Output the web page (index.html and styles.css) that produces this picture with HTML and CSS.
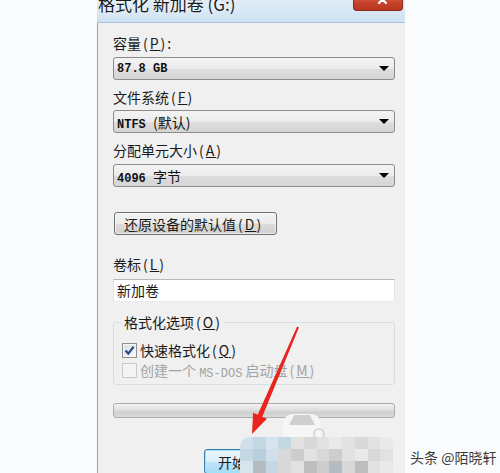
FILE: index.html
```html
<!DOCTYPE html>
<html lang="zh-CN">
<head>
    <meta charset="UTF-8">
    <title>格式化 新加卷 (G:)</title>
    <link rel="stylesheet" href="styles.css">
</head>
<body>
    <div class="screen">
        <div class="window">
            <div class="titlebar">
                <span class="title">格式化 新加卷 (G:)</span>
                <span class="close-btn">
                    <svg width="11" height="11" viewBox="0 0 11 11"><path d="M2 2 L9 9 M9 2 L2 9" stroke="#fff" stroke-width="2.2" stroke-linecap="round"/></svg>
                </span>
            </div>
            <div class="dialog">
                <div class="label first">容量<span class="key">(<u>P</u>)</span>:</div>
                <div class="combo"><span class="mono">87.8 GB</span><i class="caret"></i></div>

                <div class="label">文件系统<span class="key">(<u>F</u>)</span></div>
                <div class="combo tight"><span class="mono">NTFS <span class="cjk">(默认)</span></span><i class="caret"></i></div>

                <div class="label">分配单元大小<span class="key">(<u>A</u>)</span></div>
                <div class="combo"><span class="mono">4096 <span class="cjk">字节</span></span><i class="caret"></i></div>

                <button type="button" class="btn restore-btn">还原设备的默认值<span class="key">(<u>D</u>)</span></button>

                <div class="label volume-label">卷标<span class="key">(<u>L</u>)</span></div>
                <div class="textbox">新加卷</div>

                <fieldset class="options">
                    <legend>格式化选项<span class="key">(<u>O</u>)</span></legend>
                    <div class="check-row">
                        <span class="checkbox checked">
                            <svg width="11" height="11" viewBox="0 0 11 11"><path d="M1.5 5.5 L4.3 8.6 L9.6 1.8" fill="none" stroke="#1f4b8f" stroke-width="2.2"/></svg>
                        </span>
                        <span class="check-text">快速格式化<span class="key">(<u>Q</u>)</span></span>
                    </div>
                    <div class="check-row disabled">
                        <span class="checkbox"></span>
                        <span class="check-text">创建一个 <span class="dos">MS-DOS</span> 启动盘<span class="key">(<u>M</u>)</span></span>
                    </div>
                </fieldset>

                <div class="progress"></div>

                <div class="actions">
                    <button type="button" class="btn start-btn">开始<span class="key">(<u>S</u>)</span></button>
                    <button type="button" class="btn">关闭<span class="key">(<u>C</u>)</span></button>
                </div>
            </div>
        </div>

        <!-- 红色箭头标注 -->
        <svg class="arrow" width="500" height="473" viewBox="0 0 500 473">
            <polygon points="297.1,326.6 298.9,327.4 262.3,416.7 266.9,418.7 252,434 253.1,412.7 257.7,414.7" fill="#e8241c"/>
        </svg>

        <!-- 打码区域 -->
        <div class="blob"><div class="blob-cap"></div><div class="blob-ring"></div></div>
        <div class="mosaic">
            <i class="m-b1"></i><i class="m-b2"></i><i class="m-b3"></i><i class="m-b2"></i><i class="m-g1"></i><i class="m-g2"></i><i class="m-g1"></i><i class="m-g3"></i><i class="m-g1"></i><i class="m-g2"></i><i class="m-g1"></i><i class="m-g3"></i>
            <i class="m-b2"></i><i class="m-b4"></i><i class="m-b1"></i><i class="m-g2"></i><i class="m-g4"></i><i class="m-g1"></i><i class="m-g2"></i><i class="m-g4"></i><i class="m-g1"></i><i class="m-g3"></i><i class="m-g2"></i><i class="m-g1"></i>
            <i class="m-b3"></i><i class="m-d1"></i><i class="m-b2"></i><i class="m-g2"></i><i class="m-g1"></i><i class="m-d2"></i><i class="m-g4"></i><i class="m-d1"></i><i class="m-g2"></i><i class="m-d2"></i><i class="m-g1"></i><i class="m-g3"></i>
        </div>

        <div class="watermark">头条 @陌晓轩</div>
    </div>
</body>
</html>
```

FILE: styles.css
```css
body {
    margin: 0;
    background-color: #fafbfd;
    font-family: "Noto Sans CJK SC", "Liberation Sans", sans-serif;
    color: #1a1a1a;
}

.screen {
    position: relative;
    width: 500px;
    height: 473px;
    overflow: hidden;
}

.window {
    width: 308px;
    margin-left: 97px;
    margin-top: -8px;
}

.titlebar {
    display: flex;
    align-items: flex-start;
    height: 30px;
    background: linear-gradient(#e6f0f9, #cfe2f2);
    border-bottom: 1px solid #a9c0d6;
}

.title {
    font-size: 17px;
    line-height: 20px;
    padding-top: 2px;
    margin-left: 1px;
    color: #1b1b1b;
    text-shadow: 0 0 6px #fff;
}

.close-btn {
    display: flex;
    justify-content: center;
    width: 50px;
    height: 19px;
    padding-top: 2px;
    padding-left: 8px;
    box-sizing: border-box;
    margin-left: auto;
    margin-right: 2px;
    background: linear-gradient(#d8735c, #c7432b 60%, #b8361f);
    border: 1px solid #8a2a18;
    border-top: none;
    border-radius: 0 0 4px 4px;
}

.dialog {
    height: 450px;
    padding: 10px 10px 0 15px;
    background-color: #f0f0f0;
    border-left: 1px solid #a3a3a3;
}

.label {
    font-size: 14px;
    line-height: 20px;
    margin-top: 7px;
}

.label.first {
    margin-top: 0;
}

.label.volume-label {
    margin-top: 19px;
}

.key {
    letter-spacing: 2px;
    margin-left: 2px;
}

.key u {
    text-decoration-thickness: 1px;
}

.combo {
    display: flex;
    align-items: center;
    height: 23px;
    box-sizing: border-box;
    margin-top: 4px;
    padding: 0 5px 0 3px;
    border: 1px solid #8b8b8b;
    border-radius: 3px;
    background: linear-gradient(#f4f4f4, #ebebeb 50%, #dedede 51%, #d5d5d5);
}

.combo.tight {
    margin-top: 3px;
}

.mono {
    font-family: "Liberation Mono", "Noto Sans CJK SC", monospace;
    font-size: 12px;
    font-weight: bold;
    color: #111;
}

.cjk {
    font-family: "Noto Sans CJK SC", sans-serif;
    font-size: 14px;
    font-weight: normal;
}

.caret {
    margin-left: auto;
    width: 0;
    height: 0;
    border-left: 5px solid transparent;
    border-right: 5px solid transparent;
    border-top: 5px solid #000;
}

.btn {
    display: block;
    height: 23px;
    padding: 0 9px;
    font-family: inherit;
    font-size: 14px;
    line-height: 20px;
    color: #1a1a1a;
    border: 1px solid #707070;
    border-radius: 3px;
    background: linear-gradient(#f2f2f2, #ebebeb 50%, #dddddd 51%, #cfcfcf);
    box-shadow: inset 0 0 0 1px rgba(255, 255, 255, 0.6);
}

.restore-btn {
    width: 163px;
    margin: 25px 0 0 1px;
    text-align: left;
}

.textbox {
    height: 23px;
    box-sizing: border-box;
    margin-top: 5px;
    padding-left: 3px;
    font-size: 14px;
    line-height: 21px;
    background: #fff;
    border: 1px solid;
    border-color: #b5b8bf #e0e4ea #e8ecf0 #e0e3e9;
}

.options {
    margin: 10px 0 0;
    padding: 8px 0 4px 8px;
    border: 1px solid #d8dfe4;
    border-radius: 3px;
}

.options legend {
    padding: 0 2px;
    font-size: 14px;
    line-height: 20px;
}

.check-row {
    display: flex;
    align-items: center;
    gap: 3px;
    height: 20px;
    font-size: 14px;
}

.check-text {
    line-height: 20px;
    white-space: nowrap;
}

.check-row.disabled {
    color: #a3a3a3;
}

.dos {
    display: inline-block;
    font-family: "Liberation Mono", monospace;
    font-size: 12px;
    line-height: 12px;
    position: relative;
    top: 1px;
}

.checkbox {
    display: flex;
    align-items: center;
    justify-content: center;
    width: 15px;
    height: 15px;
    box-sizing: border-box;
    border: 1px solid #8e8f8f;
    background: linear-gradient(135deg, #dcdcdc, #fbfbfb);
    box-shadow: inset 0 0 0 1px #f4f4f4;
}

.check-row.disabled .checkbox {
    border-color: #c9c9c9;
    background: #f4f4f4;
}

.progress {
    height: 15px;
    box-sizing: border-box;
    margin-top: 18px;
    border: 1px solid #adadad;
    border-radius: 3px;
    background: linear-gradient(#f3f3f3, #e3e3e3 40%, #cfcfcf 65%, #dadada);
}

.actions {
    display: flex;
    justify-content: flex-end;
    gap: 24px;
    margin-top: 31px;
    padding-right: 3px;
}

.actions .btn {
    width: 82px;
    height: 25px;
    padding: 0;
    text-align: center;
}

.start-btn {
    border-color: #3c7fb1;
    background: linear-gradient(#eaf6fd, #d9f0fc 50%, #bee6fd 51%, #a7d9f5);
    box-shadow: inset 0 0 0 1px #9ce3fb;
}

.arrow {
    position: absolute;
    left: 0;
    top: 0;
    pointer-events: none;
}

.blob {
    position: absolute;
    left: 283px;
    top: 414px;
    width: 38px;
    height: 28px;
    border-radius: 10px 10px 4px 4px;
    background: #f6f6f6;
}

.blob-cap {
    width: 26px;
    height: 10px;
    margin: 1px auto 0;
    background: #cfcfcf;
    clip-path: polygon(20% 0, 80% 0, 100% 100%, 0 100%);
}

.blob-ring {
    position: absolute;
    right: -4px;
    top: 14px;
    width: 8px;
    height: 8px;
    border: 2px solid #d7d7d7;
    border-radius: 50%;
}

.mosaic {
    position: absolute;
    left: 240px;
    top: 437px;
    display: grid;
    grid-template-columns: repeat(12, 1fr);
    grid-template-rows: repeat(3, 12px);
    width: 153px;
    border-radius: 10px 6px 0 0;
    overflow: hidden;
}

.mosaic i { display: block; }
.m-b1 { background: #cfe0ea; }
.m-b2 { background: #c4d8e3; }
.m-b3 { background: #d6e5ed; }
.m-b4 { background: #b9cfdb; }
.m-g1 { background: #e2e2e2; }
.m-g2 { background: #d8d8d8; }
.m-g3 { background: #e9e9e9; }
.m-g4 { background: #cdcdcd; }
.m-d1 { background: #b4bcc1; }
.m-d2 { background: #bdbdbd; }

.watermark {
    position: absolute;
    left: 410px;
    top: 447px;
    font-size: 14px;
    line-height: 20px;
    color: #3a3a3a;
    text-shadow: 0 0 2px #fff, 0 0 2px #fff;
}
```
